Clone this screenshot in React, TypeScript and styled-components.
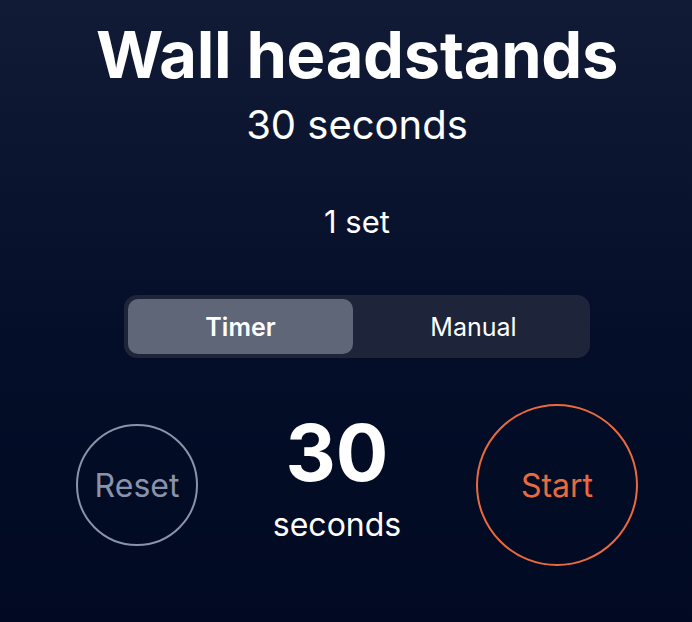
import React from "react";
import styled, { createGlobalStyle } from "styled-components";

const Global = createGlobalStyle`
  html, body { margin: 0; padding: 0; }
  body {
    width: 692px;
    height: 622px;
    overflow: hidden;
    background: linear-gradient(180deg, #121b36 0%, #050e28 55%, #010a22 100%);
    font-family: Inter, "Noto Sans", sans-serif;
    color: #ffffff;
  }
`;

const Screen = styled.main`
  width: 714px;
  height: 622px;
  display: flex;
  flex-direction: column;
  align-items: center;
  padding-top: 16px;
  box-sizing: border-box;
`;

const Title = styled.h1`
  margin: 0;
  font-size: 65px;
  font-weight: 700;
  line-height: 78px;
  letter-spacing: -0.3px;
`;

const Subtitle = styled.div`
  font-size: 40px;
  font-weight: 400;
  line-height: 48px;
  margin-top: 7px;
`;

const Sets = styled.div`
  margin-top: 54px;
  font-size: 31px;
  line-height: 38px;
`;

const Segmented = styled.div`
  margin-top: 54px;
  width: 466px;
  height: 63px;
  box-sizing: border-box;
  padding: 4px;
  border-radius: 13px;
  background: #1e253a;
  display: grid;
  grid-template-columns: 1fr 1fr;
  column-gap: 8px;
`;

const Segment = styled.button<{ $active?: boolean }>`
  border: none;
  border-radius: 10px;
  font-family: inherit;
  font-size: 25px;
  font-weight: ${(p) => (p.$active ? 600 : 400)};
  color: #ffffff;
  background: ${(p) => (p.$active ? "#5e6678" : "transparent")};
  padding: 0;
`;

const Controls = styled.div`
  margin-top: 46px;
  width: 562px;
  display: flex;
  align-items: center;
  justify-content: space-between;
`;

const CircleButton = styled.button<{ $size: number; $color: string }>`
  width: ${(p) => p.$size}px;
  height: ${(p) => p.$size}px;
  border-radius: 50%;
  border: 2px solid ${(p) => p.$color};
  color: ${(p) => p.$color};
  background: transparent;
  font-family: inherit;
  font-size: 32px;
  font-weight: 400;
  padding: 0;
  display: flex;
  align-items: center;
  justify-content: center;
`;

const Countdown = styled.div`
  display: flex;
  flex-direction: column;
  align-items: center;
  margin-top: -14px;
`;

const BigNumber = styled.div`
  font-size: 78px;
  font-weight: 700;
  line-height: 84px;
`;

const Unit = styled.div`
  font-size: 32px;
  line-height: 40px;
  margin-top: 10px;
`;

export default function App() {
  return (
    <>
      <Global />
      <Screen>
        <Title>Wall headstands</Title>
        <Subtitle>30 seconds</Subtitle>
        <Sets>1 set</Sets>
        <Segmented>
          <Segment $active>Timer</Segment>
          <Segment>Manual</Segment>
        </Segmented>
        <Controls>
          <CircleButton $size={122} $color="#8a93aa">Reset</CircleButton>
          <Countdown>
            <BigNumber>30</BigNumber>
            <Unit>seconds</Unit>
          </Countdown>
          <CircleButton $size={162} $color="#ea6a3e">Start</CircleButton>
        </Controls>
      </Screen>
    </>
  );
}
